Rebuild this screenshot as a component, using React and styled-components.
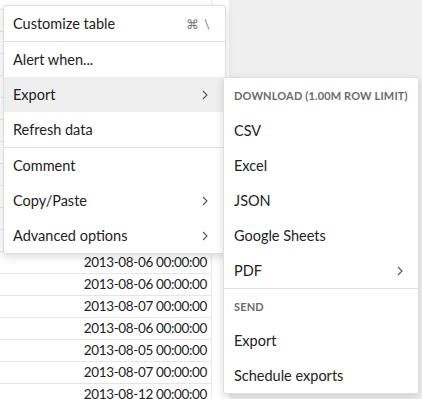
import React from "react";
import styled, { createGlobalStyle } from "styled-components";

const Global = createGlobalStyle`
  html, body {
    margin: 0;
    padding: 0;
    overflow: hidden;
  }
  body {
    font-family: Lato, "Noto Sans", sans-serif;
    color: #222;
  }
`;

const Page = styled.div`
  position: relative;
  display: flex;
  width: 422px;
  height: 399px;
  background: #efefef;
  overflow: hidden;
`;

const TablePane = styled.div`
  width: 229px;
  height: 100%;
  background: #fff;
  overflow: hidden;
`;

const Rows = styled.div`
  margin-top: -12px;
  width: 211px;
  border-right: 1px solid #e8e8e8;
`;

const Cell = styled.div`
  height: 21px;
  line-height: 21px;
  border-bottom: 1px solid #e6e6e6;
  text-align: right;
  padding-right: 4px;
  font-size: 13.5px;
  letter-spacing: -0.35px;
  color: #222;
`;

const Menu = styled.div`
  position: absolute;
  left: ${(p) => p.left}px;
  top: ${(p) => p.top}px;
  width: ${(p) => p.width}px;
  background: #fff;
  border: 1px solid #dedede;
  border-radius: 3px;
  box-shadow: 0 3px 8px rgba(0, 0, 0, 0.14);
  z-index: ${(p) => p.z || 1};
`;

const Item = styled.div`
  display: flex;
  align-items: center;
  justify-content: space-between;
  height: 35px;
  padding: 0 ${(p) => p.pr || 17}px 0 ${(p) => p.pl || 9}px;
  font-size: 14.5px;
  color: #222;
  white-space: nowrap;
  background: ${(p) => (p.active ? "#efefef" : "transparent")};
`;

const Heading = styled.div`
  display: flex;
  align-items: center;
  height: ${(p) => p.h || 35}px;
  padding-left: 10px;
  font-size: 11px;
  font-weight: 700;
  letter-spacing: 0.15px;
  color: #6b6b6b;
  text-transform: uppercase;
  white-space: nowrap;
`;

const Separator = styled.div`
  height: 1px;
  background: #e0e0e0;
`;

const Shortcut = styled.span`
  font-size: 13px;
  color: #777;
  letter-spacing: 1px;
  margin-right: -3px;
`;

const Chevron = () => (
  <svg width="6" height="10" viewBox="0 0 6 10" fill="none">
    <polyline points="1,1 5,5 1,9" stroke="#555" strokeWidth="1.1" />
  </svg>
);

const dates = [
  "", "", "", "", "", "", "", "", "", "", "", "",
  "08-06", "08-06", "08-07", "08-06", "08-05", "08-07", "08-12",
];

export default function App() {
  return (
    <>
      <Global />
      <Page>
        <TablePane>
          <Rows>
            {dates.map((d, i) => (
              <Cell key={i}>{d ? `2013-${d} 00:00:00` : ""}</Cell>
            ))}
          </Rows>
        </TablePane>

        <Menu left={3} top={5} width={221}>
          <Item>
            Customize table
            <Shortcut>⌘ \</Shortcut>
          </Item>
          <Separator />
          <Item>Alert when...</Item>
          <Item active>
            Export
            <Chevron />
          </Item>
          <Item>Refresh data</Item>
          <Separator />
          <Item>Comment</Item>
          <Item>
            Copy/Paste
            <Chevron />
          </Item>
          <Item>
            Advanced options
            <Chevron />
          </Item>
        </Menu>

        <Menu left={223} top={77} width={194} z={2}>
          <Heading>Download (1.00M row limit)</Heading>
          <Item pl={10} pr={15}>CSV</Item>
          <Item pl={10} pr={15}>Excel</Item>
          <Item pl={10} pr={15}>JSON</Item>
          <Item pl={10} pr={15}>Google Sheets</Item>
          <Item pl={10} pr={15}>
            PDF
            <Chevron />
          </Item>
          <Separator />
          <Heading h={34}>Send</Heading>
          <Item pl={10} pr={15}>Export</Item>
          <Item pl={10} pr={15}>Schedule exports</Item>
        </Menu>
      </Page>
    </>
  );
}
